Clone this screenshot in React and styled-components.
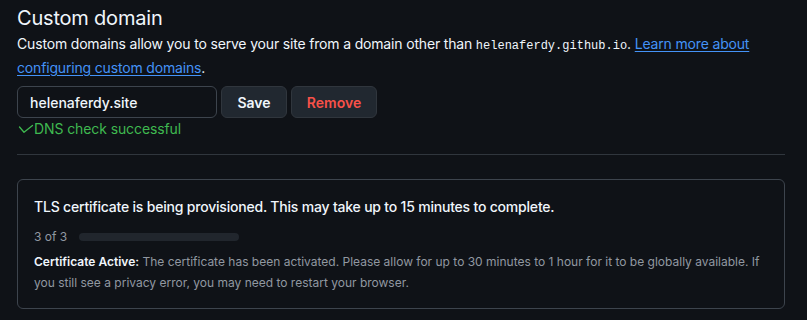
import React from "react";
import styled, { createGlobalStyle } from "styled-components";

const Global = createGlobalStyle`
  html, body { margin: 0; padding: 0; background: #0f1217; }
  body { font-family: Inter, "Noto Sans", sans-serif; color: #f0f6fc; -webkit-font-smoothing: antialiased; }
`;

const Page = styled.div`
  padding: 3px 22px 0 17px;
  width: 768px;
`;

const Heading = styled.h2`
  margin: 0;
  font-size: 20px;
  font-weight: 400;
  letter-spacing: -0.2px;
  line-height: 30px;
  color: #f0f6fc;
`;

const Desc = styled.p`
  margin: 0;
  font-size: 14px;
  line-height: 21px;
  letter-spacing: -0.17px;
  color: #f0f6fc;
`;

const Code = styled.code`
  font-family: "Liberation Mono", "DejaVu Sans Mono", monospace;
  font-size: 12px;
  letter-spacing: 0;
`;

const Link = styled.a`
  color: #4493f8;
  text-decoration: underline;
  text-underline-offset: 2px;
`;

const FormRow = styled.div`
  display: flex;
  gap: 4px;
  margin-top: 8px;
`;

const Input = styled.input`
  box-sizing: border-box;
  width: 200px;
  height: 32px;
  padding: 0 12px;
  background: #0f1217;
  border: 1px solid #3d444d;
  border-radius: 6px;
  color: #f0f6fc;
  font-family: Inter, sans-serif;
  font-size: 14px;
  font-weight: 500;
  outline: none;
`;

const Button = styled.button`
  box-sizing: border-box;
  height: 32px;
  width: ${(p) => p.$w}px;
  background: #212830;
  border: 1px solid #30363d;
  border-radius: 6px;
  color: ${(p) => (p.$danger ? "#f85149" : "#f0f6fc")};
  font-family: Inter, sans-serif;
  font-size: 14px;
  font-weight: 600;
  cursor: pointer;
`;

const Status = styled.div`
  display: flex;
  align-items: center;
  margin-left: 1px;
  font-size: 14px;
  line-height: 21px;
  letter-spacing: -0.1px;
  color: #3fb950;
`;

const Divider = styled.hr`
  border: 0;
  border-top: 1px solid #30363d;
  margin: 15px 0 24px;
`;

const Card = styled.div`
  border: 1px solid #3d444d;
  border-radius: 6px;
  padding: 16px 16px 15px;
`;

const CardTitle = styled.div`
  font-size: 14px;
  font-weight: 500;
  line-height: 21px;
  letter-spacing: -0.2px;
  color: #f0f6fc;
`;

const Progress = styled.div`
  display: flex;
  align-items: center;
  gap: 12px;
  margin-top: 10px;
  font-size: 12px;
  line-height: 20px;
  color: #9198a1;
`;

const Track = styled.div`
  width: 160px;
  height: 8px;
  border-radius: 6px;
  background: #21262d;
`;

const Note = styled.p`
  margin: 5px 0 0;
  font-size: 12px;
  line-height: 20.7px;
  color: #9198a1;
  strong { color: #f0f6fc; font-weight: 600; }
`;

export default function App() {
  return (
    <>
      <Global />
      <Page>
        <Heading>Custom domain</Heading>
        <Desc>
          Custom domains allow you to serve your site from a domain other than{" "}
          <Code>helenaferdy.github.io</Code>. <Link href="#">Learn more about configuring custom domains</Link>.
        </Desc>
        <FormRow>
          <Input defaultValue="helenaferdy.site" />
          <Button $w={66}>Save</Button>
          <Button $w={86} $danger>Remove</Button>
        </FormRow>
        <Status>
          <svg width="16" height="10" viewBox="0 0 16 10" fill="none">
            <polyline points="1.5,3 6,8.2 14.5,1.5" stroke="#3fb950" strokeWidth="1.3" strokeLinecap="round" strokeLinejoin="round" />
          </svg>
          DNS check successful
        </Status>
        <Divider />
        <Card>
          <CardTitle>TLS certificate is being provisioned. This may take up to 15 minutes to complete.</CardTitle>
          <Progress>
            3 of 3
            <Track />
          </Progress>
          <Note>
            <strong>Certificate Active:</strong> The certificate has been activated. Please allow for up to 30 minutes to 1 hour for it to be globally available. If you still see a privacy error, you may need to restart your browser.
          </Note>
        </Card>
      </Page>
    </>
  );
}
